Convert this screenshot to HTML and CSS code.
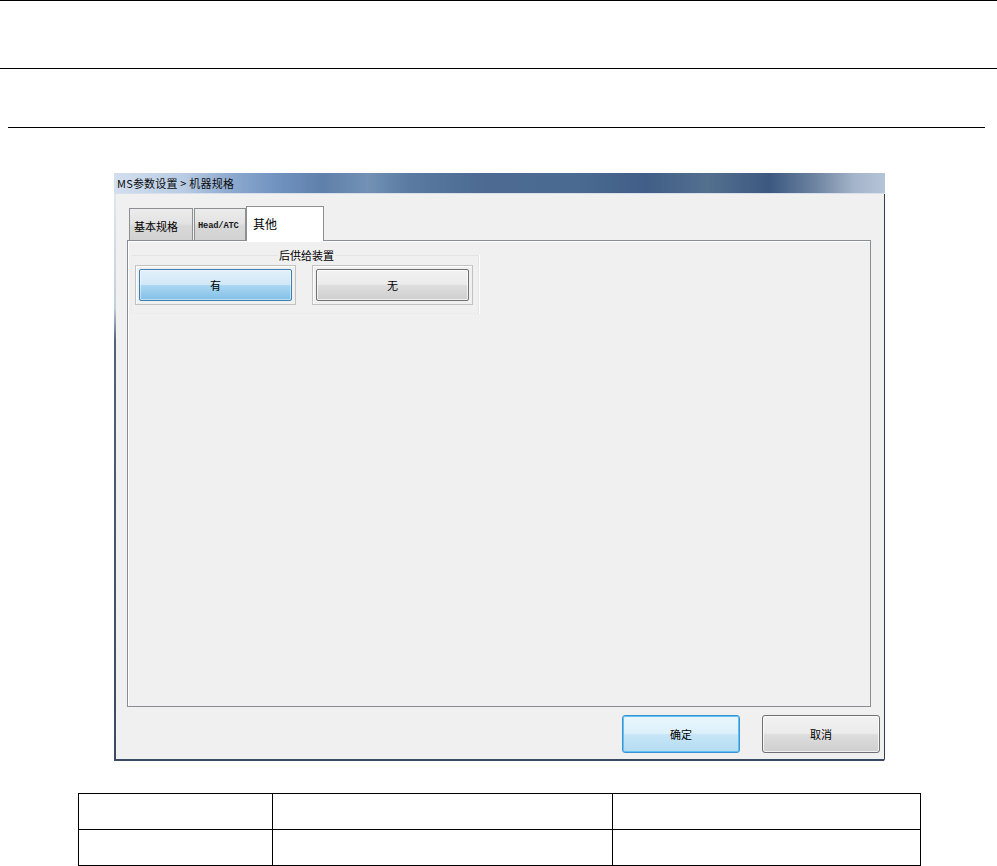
FILE: index.html
```html
<!DOCTYPE html>
<html lang="zh-CN">
<head>
<meta charset="utf-8">
<title>MS参数设置 > 机器规格</title>
<link rel="stylesheet" href="styles.css">
</head>
<body>
<div class="page">
  <div class="rule rule-top"></div>
  <div class="rule rule-mid"></div>
  <div class="rule rule-short"></div>

  <div class="window">
    <div class="titlebar"><span class="title">MS参数设置 &gt; 机器规格</span></div>
    <div class="client">
      <div class="tabs">
        <div class="tab tab-basic">基本规格</div>
        <div class="tab tab-head">Head/ATC</div>
        <div class="tab tab-active">其他</div>
      </div>
      <div class="panel">
        <fieldset class="group">
          <legend class="group-label">后供给装置</legend>
          <div class="options">
            <div class="opt"><div class="btn btn-on">有</div></div>
            <div class="opt"><div class="btn btn-off">无</div></div>
          </div>
        </fieldset>
      </div>
      <div class="actions">
        <div class="dlg-btn dlg-ok">确定</div>
        <div class="dlg-btn dlg-cancel">取消</div>
      </div>
    </div>
  </div>

  <table class="grid">
    <tr><td class="c1"></td><td class="c2"></td><td class="c3"></td></tr>
    <tr><td class="c1"></td><td class="c2"></td><td class="c3"></td></tr>
  </table>
</div>
</body>
</html>
```

FILE: styles.css
```css
* { box-sizing: border-box; }

html, body {
  margin: 0;
  padding: 0;
  background: #ffffff;
}

body {
  font-family: "Noto Sans CJK SC", "Liberation Sans", sans-serif;
  color: #000;
}

.page {
  width: 997px;
  display: flex;
  flex-direction: column;
  align-items: flex-start;
}

.rule {
  height: 1px;
  background: #000;
}

.rule-top { width: 997px; }
.rule-mid { width: 997px; margin-top: 67px; }
.rule-short { width: 977px; margin-top: 58px; margin-left: 8px; }

/* ---------- window ---------- */
.window {
  margin-top: 45px;
  margin-left: 114px;
  width: 771px;
  height: 588px;
  display: flex;
  flex-direction: column;
}

.titlebar {
  height: 21px;
  display: flex;
  align-items: center;
  padding-left: 3px;
  border-bottom: 1px solid #d7e0ea;
  background: linear-gradient(90deg,
    #d3dfef 0%,
    #b9cce4 9%,
    #8eaacf 15%,
    #7193c0 21%,
    #5f80aa 27%,
    #7391b5 33%,
    #5b7ba2 38%,
    #4c6a92 48%,
    #4b6a91 60%,
    #405e87 69%,
    #53708f 77%,
    #3c5880 85%,
    #6e84a1 91%,
    #a4b4c9 96%,
    #b6c4d7 100%);
}

.title {
  font-size: 11px;
  line-height: 12px;
  letter-spacing: 0.2px;
  color: #0b0b0b;
  white-space: nowrap;
}

.client {
  flex: 1;
  display: flex;
  flex-direction: column;
  padding: 12px 0 6px 0;
  border-left: 2px solid transparent;
  border-bottom: 2px solid transparent;
  border-right: 1px solid #2e3e54;
  background:
    linear-gradient(#f0f0f0, #f0f0f0) padding-box,
    linear-gradient(to bottom, #dfe5ee 0%, #c4cfdc 20%, #50627c 26%, #3a4a63 100%) border-box;
}

/* ---------- tabs ---------- */
.tabs {
  height: 34px;
  margin-left: 13px;
  display: flex;
  align-items: flex-end;
  position: relative;
  z-index: 1;
}

.tab {
  height: 32px;
  display: flex;
  align-items: center;
  padding-left: 4px;
  border: 1px solid #8d8f93;
  border-bottom: none;
  background: linear-gradient(#ececec 0%, #e3e3e3 45%, #d8d8d8 55%, #d2d2d2 100%);
  white-space: nowrap;
}

.tab-basic {
  width: 64px;
  margin-right: 1px;
  font-size: 11px;
  padding-top: 2px;
}

.tab-head {
  width: 52px;
  font-family: "Liberation Mono", "DejaVu Sans Mono", monospace;
  font-size: 8.8px;
  font-weight: bold;
  color: #1a1a1a;
  letter-spacing: -0.2px;
  padding-left: 3px;
  padding-top: 2px;
}

.tab-active {
  width: 78px;
  height: 35px;
  margin-bottom: -1px;
  padding-left: 6px;
  padding-bottom: 2px;
  font-size: 12px;
  background: #ffffff;
  border-color: #8d8f93;
}

/* ---------- panel ---------- */
.panel {
  margin-left: 11px;
  width: 744px;
  height: 467px;
  border: 1px solid #898c95;
  box-shadow: inset 1px 1px 0 #ffffff;
  background: #f0f0f0;
  padding: 8px 0 0 3px;
}

.group {
  width: 348px;
  height: 65px;
  margin: 0;
  padding: 4px 0 0 3px;
  border: 1px solid #e4e4e4;
  border-left-color: #ececec;
  border-bottom-color: #ececec;
  box-shadow: 1px 0 0 #ffffff;
}

.group-label {
  margin: 0 auto;
  padding: 0 1px;
  font-size: 11px;
  line-height: 12px;
}

.options {
  display: flex;
  gap: 16px;
}

.opt {
  width: 161px;
  height: 40px;
  padding: 3px;
  border: 1px solid #c2c2c2;
  box-shadow: inset 1px 1px 0 #ffffff;
}

.btn {
  height: 100%;
  display: flex;
  align-items: center;
  justify-content: center;
  border-radius: 2px;
  font-size: 11px;
}

.btn-on {
  border: 1px solid #3c7fb1;
  background: linear-gradient(#e2f0fa 0%, #d2e8f7 48%, #a9d6f2 52%, #82c0e7 100%);
  box-shadow: inset 0 0 0 1px rgba(255,255,255,0.45);
}

.btn-off {
  border: 1px solid #707070;
  background: linear-gradient(#f2f2f2 0%, #ebebeb 48%, #dddddd 52%, #cfcfcf 100%);
  box-shadow: inset 0 0 0 1px rgba(255,255,255,0.7);
}

/* ---------- dialog buttons ---------- */
.actions {
  margin-top: 8px;
  height: 38px;
  display: flex;
  justify-content: flex-end;
  gap: 22px;
  padding-right: 4px;
}

.dlg-btn {
  width: 118px;
  height: 38px;
  display: flex;
  align-items: center;
  justify-content: center;
  border-radius: 3px;
  font-size: 11px;
}

.dlg-ok {
  border: 1px solid #3a93d2;
  background: linear-gradient(#eaf6fd 0%, #dcf0fb 48%, #c6e6f7 52%, #b5dcf1 100%);
  box-shadow: inset 0 0 0 1px #63c1ef;
}

.dlg-cancel {
  border: 1px solid #707070;
  background: linear-gradient(#f2f2f2 0%, #ebebeb 48%, #dddddd 52%, #cfcfcf 100%);
  box-shadow: inset 0 0 0 1px rgba(255,255,255,0.7);
}

/* ---------- table ---------- */
.grid {
  margin-top: 32px;
  margin-left: 78px;
  border-collapse: collapse;
}

.grid td {
  height: 36px;
  border: 1px solid #000;
  padding: 0;
}

.grid .c1 { width: 194px; }
.grid .c2 { width: 340px; }
.grid .c3 { width: 308px; }
```
